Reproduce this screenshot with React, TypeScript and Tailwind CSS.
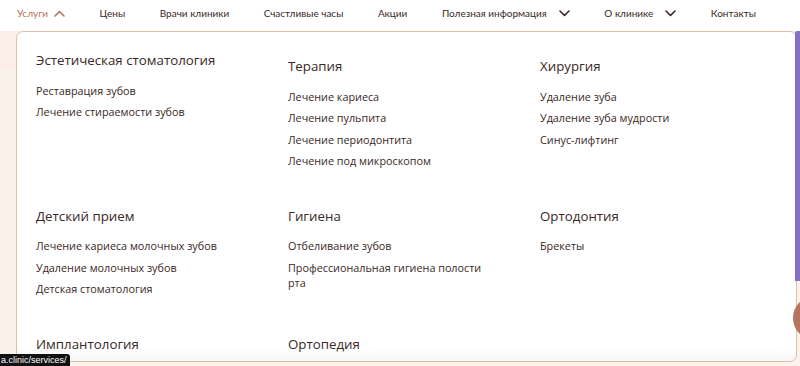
import React from "react";

const Chevron = ({ up, className }: { up?: boolean; className?: string }) => (
  <svg width="11" height="7" viewBox="0 0 11 7" className={className} fill="none">
    {up ? (
      <path d="M1 6 L5.5 1.5 L10 6" stroke="currentColor" strokeWidth="1.6" strokeLinecap="round" strokeLinejoin="round" />
    ) : (
      <path d="M1 1 L5.5 5.5 L10 1" stroke="currentColor" strokeWidth="1.6" strokeLinecap="round" strokeLinejoin="round" />
    )}
  </svg>
);

type Section = { title: string; items: string[]; shift?: boolean };

const sections: Section[] = [
  { title: "Эстетическая стоматология", items: ["Реставрация зубов", "Лечение стираемости зубов"], shift: true },
  { title: "Терапия", items: ["Лечение кариеса", "Лечение пульпита", "Лечение периодонтита", "Лечение под микроскопом"] },
  { title: "Хирургия", items: ["Удаление зуба", "Удаление зуба мудрости", "Синус-лифтинг"] },
  { title: "Детский прием", items: ["Лечение кариеса молочных зубов", "Удаление молочных зубов", "Детская стоматология"] },
  { title: "Гигиена", items: ["Отбеливание зубов", "Профессиональная гигиена полости рта"] },
  { title: "Ортодонтия", items: ["Брекеты"] },
  { title: "Имплантология", items: [] },
  { title: "Ортопедия", items: [] },
];

export default function App() {
  return (
    <div
      className="relative w-[800px] h-[366px] overflow-hidden bg-[#f9f1ea] text-[#3a2824]"
      style={{ fontFamily: "'Open Sans', sans-serif" }}
    >
      {/* Top nav */}
      <nav
        className="h-[31px] bg-white flex items-center justify-between pl-[17px] pr-[44px] pb-[4px] text-[10px]"
        style={{ fontFamily: "Lato, sans-serif" }}
      >
        <span className="flex items-center gap-[6px] text-[#b7735d]">
          Услуги <Chevron up className="text-[#b7735d]" />
        </span>
        <span>Цены</span>
        <span>Врачи клиники</span>
        <span>Счастливые часы</span>
        <span>Акции</span>
        <span className="flex items-center gap-[12px]">
          Полезная информация <Chevron />
        </span>
        <span className="flex items-center gap-[12px]">
          О клинике <Chevron />
        </span>
        <span>Контакты</span>
      </nav>

      {/* Page body behind */}
      <div className="h-[39px] bg-[#fbefe8]" />
      <div className="h-[296px] bg-[#faf3ec]" />

      {/* Dropdown panel */}
      <div className="absolute left-[16px] top-[31px] w-[781px] h-[331px] bg-white border border-[#e6bba4] rounded-[7px] overflow-hidden">
        <div className="grid grid-cols-[252px_252px_252px] gap-y-[37.5px] pl-[19px] pt-[24px]">
          {sections.map((s) => (
            <div key={s.title} className={s.shift ? "-mt-[6px]" : ""}>
              <div className="text-[13.3px] leading-[20px]">{s.title}</div>
              {s.items.length > 0 && (
                <ul className="mt-[12.5px] flex flex-col gap-[6.5px] text-[10.8px] leading-[15px] max-w-[205px]">
                  {s.items.map((it) => (
                    <li key={it}>{it}</li>
                  ))}
                </ul>
              )}
            </div>
          ))}
        </div>
        <div className="absolute left-0 right-0 bottom-0 h-[14px] bg-gradient-to-b from-transparent to-[#00000008]" />
      </div>

      {/* Scrollbar */}
      <div className="absolute right-0 top-[31px] w-[5px] h-[250px] bg-[#8570c6] rounded-tl-[2px]" />

      {/* Brown circle button */}
      <div className="absolute left-[793px] top-[296px] w-[48px] h-[44px] rounded-full bg-[#b6735d]" />

      {/* Status tooltip */}
      <div
        className="absolute left-0 bottom-0 h-[12px] pl-[1px] pr-[3px] bg-[#111] text-white text-[9px] leading-[12px] rounded-tr-[3px]"
        style={{ fontFamily: "'Liberation Sans', sans-serif" }}
      >
        a.clinic/services/
      </div>
    </div>
  );
}
